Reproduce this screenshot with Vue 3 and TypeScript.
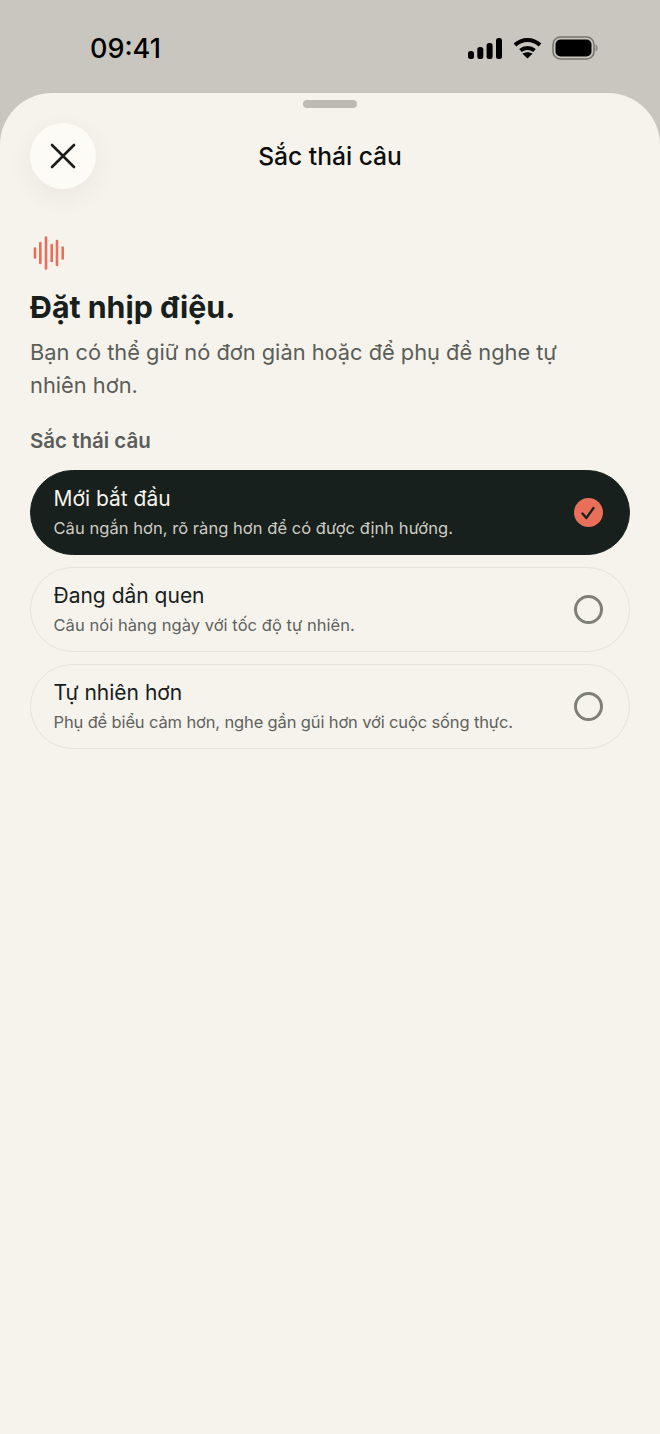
<script setup lang="ts">
interface Tone {
  title: string
  sub: string
  selected?: boolean
}

const tones: Tone[] = [
  { title: 'Mới bắt đầu', sub: 'Câu ngắn hơn, rõ ràng hơn để có được định hướng.', selected: true },
  { title: 'Đang dần quen', sub: 'Câu nói hàng ngày với tốc độ tự nhiên.' },
  { title: 'Tự nhiên hơn', sub: 'Phụ đề biểu cảm hơn, nghe gần gũi hơn với cuộc sống thực.' },
]

const bars = [
  { x: 2, h: 9 },
  { x: 7.3, h: 20 },
  { x: 13, h: 31 },
  { x: 18.7, h: 16 },
  { x: 24, h: 24 },
  { x: 29.7, h: 11 },
]
</script>

<template>
  <div class="screen">
    <header class="status">
      <span class="time">09:41</span>
      <div class="status-icons">
        <svg width="34" height="21" viewBox="0 0 34 21">
          <rect x="0" y="13" width="6" height="8" rx="2.5" fill="#000" />
          <rect x="9.3" y="9" width="6" height="12" rx="2.5" fill="#000" />
          <rect x="18.6" y="5" width="6" height="16" rx="2.5" fill="#000" />
          <rect x="28" y="0" width="6" height="21" rx="2.5" fill="#000" />
        </svg>
        <svg width="29" height="22" viewBox="0 0 29 22" fill="none" stroke="#000" stroke-width="4">
          <path d="M2 8 C9 1.2 20 1.2 27 8" />
          <path d="M7.5 13.5 C11.5 10 17.5 10 21.5 13.5" />
          <path d="M14.5 21.5 L9.5 16.8 C12.5 14.8 16.5 14.8 19.5 16.8 Z" fill="#000" stroke="none" />
        </svg>
        <svg width="46" height="24" viewBox="0 0 46 24">
          <rect x="1" y="1" width="41" height="22" rx="7.5" fill="none" stroke="#77746f" stroke-width="1.6" />
          <rect x="3.5" y="3.5" width="36" height="17" rx="5" fill="#000" />
          <path d="M43.5 8.5 C45 9 45.6 10.3 45.6 12 C45.6 13.7 45 15 43.5 15.5 Z" fill="#8a8782" />
        </svg>
      </div>
    </header>

    <main class="sheet">
      <div class="handle"></div>
      <div class="nav">
        <button class="close" type="button" aria-label="Đóng">
          <svg width="26" height="26" viewBox="0 0 26 26" fill="none" stroke="#1a1d1a" stroke-width="2.6" stroke-linecap="round">
            <path d="M2 2 L24 24 M24 2 L2 24" />
          </svg>
        </button>
        <h2 class="nav-title">Sắc thái câu</h2>
      </div>

      <section class="content">
        <svg class="wave" width="32" height="34" viewBox="0 0 32 34" fill="none" stroke="#e4705c" stroke-width="2.6" stroke-linecap="round">
          <line v-for="b in bars" :key="b.x" :x1="b.x" :x2="b.x" :y1="17 - b.h / 2" :y2="17 + b.h / 2" />
        </svg>
        <h1 class="heading">Đặt nhịp điệu.</h1>
        <p class="lead">Bạn có thể giữ nó đơn giản hoặc để phụ đề nghe tự nhiên hơn.</p>
        <h3 class="label">Sắc thái câu</h3>

        <div class="options">
          <div v-for="t in tones" :key="t.title" class="option" :class="{ selected: t.selected }">
            <div class="option-text">
              <div class="option-title">{{ t.title }}</div>
              <div class="option-sub">{{ t.sub }}</div>
            </div>
            <span v-if="t.selected" class="check">
              <svg width="16" height="16" viewBox="0 0 16 16" fill="none" stroke="#1a221e" stroke-width="2.3" stroke-linecap="round" stroke-linejoin="round">
                <path d="M2.5 8.5 L6.3 13 L13.5 3" />
              </svg>
            </span>
            <span v-else class="radio"></span>
          </div>
        </div>
      </section>
    </main>
  </div>
</template>

<style>
html,
body {
  margin: 0;
  background: #f6f3ec;
}
</style>

<style scoped>
.screen {
  width: 660px;
  height: 1434px;
  background: #c9c6bf;
  display: flex;
  flex-direction: column;
  overflow: hidden;
  font-family: Inter, "Noto Sans", sans-serif;
  color: #17201c;
}

.status {
  height: 93px;
  box-sizing: border-box;
  padding: 31px 62px 0 90px;
  display: flex;
  justify-content: space-between;
  align-items: flex-start;
}

.time {
  font-size: 27px;
  line-height: 35px;
  font-weight: 500;
  color: #000;
}

.status-icons {
  display: flex;
  align-items: center;
  gap: 10.5px;
  padding-top: 5px;
}

.sheet {
  flex: 1;
  background: #f6f3ec;
  border-radius: 52px 52px 0 0;
  padding-top: 7px;
}

.handle {
  width: 54px;
  height: 8px;
  border-radius: 4px;
  background: #bdbab4;
  margin: 0 auto;
}

.nav {
  position: relative;
  height: 66px;
  margin-top: 15px;
  display: flex;
  align-items: center;
  justify-content: center;
}

.close {
  position: absolute;
  left: 30px;
  top: 0;
  width: 66px;
  height: 66px;
  border: none;
  padding: 0;
  border-radius: 50%;
  background: #fdfbf6;
  box-shadow: 0 8px 26px rgba(60, 50, 30, 0.06);
  display: flex;
  align-items: center;
  justify-content: center;
}

.nav-title {
  margin: -1px 0 0;
  font-size: 24.6px;
  line-height: 32px;
  font-weight: 500;
  color: #0c0d0c;
}

.content {
  padding: 47px 30px 0;
}

.wave {
  display: block;
  margin-left: 3px;
}

.heading {
  margin: 18px 0 0;
  font-size: 30.3px;
  line-height: 38px;
  font-weight: 700;
  color: #17201c;
}

.lead {
  margin: 10px 0 0;
  padding-right: 60px;
  font-size: 21.8px;
  line-height: 33px;
  color: #5a5d58;
}

.label {
  margin: 25px 0 0;
  font-size: 20.5px;
  line-height: 28px;
  font-weight: 600;
  color: #5a5d58;
}

.options {
  margin-top: 15px;
  display: flex;
  flex-direction: column;
  gap: 12px;
}

.option {
  height: 85px;
  box-sizing: border-box;
  border-radius: 42.5px;
  border: 1.5px solid #e6e3dc;
  padding: 0 26.5px 0 22.5px;
  display: flex;
  align-items: center;
  justify-content: space-between;
}

.option.selected {
  background: #17201c;
  border-color: #17201c;
}

.option-title {
  font-size: 21px;
  line-height: 26px;
  font-weight: 400;
  color: #17201c;
}

.option-sub {
  margin-top: 5px;
  font-size: 16.5px;
  line-height: 22px;
  letter-spacing: 0.05px;
  color: #5f625d;
}

.option:last-child .option-sub {
  letter-spacing: -0.14px;
}

.selected .option-title {
  color: #f6f3ec;
}

.selected .option-sub {
  color: #cfccc5;
}

.check,
.radio {
  width: 29px;
  height: 29px;
  box-sizing: border-box;
  border-radius: 50%;
  flex-shrink: 0;
}

.check {
  background: #e96f5b;
  display: flex;
  align-items: center;
  justify-content: center;
}

.radio {
  border: 3px solid #7e7f79;
}
</style>
